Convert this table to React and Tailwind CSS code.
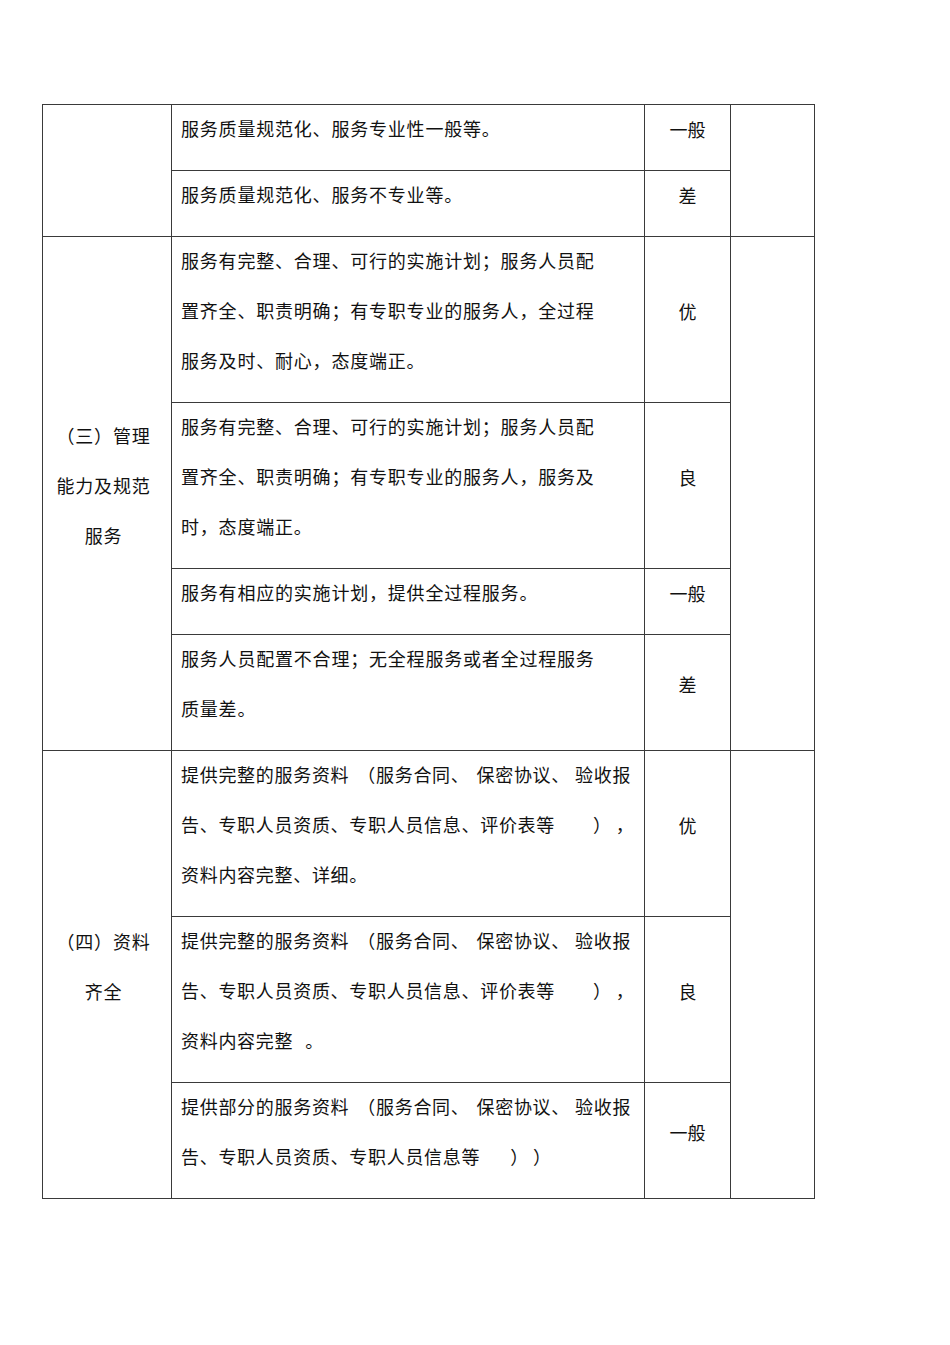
import React from "react";

const B = "border-r border-b border-[#3a3a3a]";

function Mid({ children, tight }) {
  return (
    <div className={`${B} pl-[9px] pr-[4px] pb-[17px]`}>
      <div className={`-mt-[2px] leading-[50px] ${tight ? "tracking-[0.7px]" : "tracking-[0.8px]"}`}>{children}</div>
    </div>
  );
}

function Grade({ children }) {
  return (
    <div className={`${B} flex items-center justify-center pb-[18px]`}>
      <span className="leading-[46px]">{children}</span>
    </div>
  );
}

function Left({ span, children }) {
  return (
    <div className={`${B} ${span} flex items-center justify-center pb-[17px] pr-[7px] text-center`}>
      <div className="leading-[50px] tracking-[0.8px]">{children}</div>
    </div>
  );
}

function Right({ span }) {
  return <div className={`${B} ${span}`} />;
}

export default function App() {
  return (
    <div
      className="w-[950px] min-h-[1345px] bg-white pt-[104px] pl-[42px] text-[18px] text-[#111]"
      style={{ fontFamily: '"Noto Sans CJK SC", "Noto Sans", sans-serif' }}
    >
      <div className="grid w-[773px] grid-cols-[129px_473px_86px_84px] border-l border-t border-[#3a3a3a]">
        {/* Group 1 */}
        <Left span="row-span-2" />
        <Mid>服务质量规范化、服务专业性一般等。</Mid>
        <Grade>一般</Grade>
        <Right span="row-span-2" />
        <Mid>服务质量规范化、服务不专业等。</Mid>
        <Grade>差</Grade>

        {/* Group 2 */}
        <Left span="row-span-4">
          <div>（三）管理</div>
          <div>能力及规范</div>
          <div>服务</div>
        </Left>
        <Mid>
          <div>服务有完整、合理、可行的实施计划；服务人员配</div>
          <div>置齐全、职责明确；有专职专业的服务人，全过程</div>
          <div>服务及时、耐心，态度端正。</div>
        </Mid>
        <Grade>优</Grade>
        <Right span="row-span-4" />
        <Mid>
          <div>服务有完整、合理、可行的实施计划；服务人员配</div>
          <div>置齐全、职责明确；有专职专业的服务人，服务及</div>
          <div>时，态度端正。</div>
        </Mid>
        <Grade>良</Grade>
        <Mid>服务有相应的实施计划，提供全过程服务。</Mid>
        <Grade>一般</Grade>
        <Mid>
          <div>服务人员配置不合理；无全程服务或者全过程服务</div>
          <div>质量差。</div>
        </Mid>
        <Grade>差</Grade>

        {/* Group 3 */}
        <Left span="row-span-3">
          <div>（四）资料</div>
          <div>齐全</div>
        </Left>
        <Mid tight>
          <div className="flex whitespace-nowrap">
            <span>提供完整的服务资料</span>
            <span className="ml-[8px]">（服务合同、</span>
            <span className="ml-[7px]">保密协议、</span>
            <span className="ml-[5px]">验收报</span>
          </div>
          <div className="flex whitespace-nowrap">
            <span>告、专职人员资质、专职人员信息、评价表等</span>
            <span className="ml-[38px]">）</span>
            <span className="ml-[4px]">，</span>
          </div>
          <div>资料内容完整、详细。</div>
        </Mid>
        <Grade>优</Grade>
        <Right span="row-span-3" />
        <Mid tight>
          <div className="flex whitespace-nowrap">
            <span>提供完整的服务资料</span>
            <span className="ml-[8px]">（服务合同、</span>
            <span className="ml-[7px]">保密协议、</span>
            <span className="ml-[5px]">验收报</span>
          </div>
          <div className="flex whitespace-nowrap">
            <span>告、专职人员资质、专职人员信息、评价表等</span>
            <span className="ml-[38px]">）</span>
            <span className="ml-[4px]">，</span>
          </div>
          <div className="flex whitespace-nowrap">
            <span>资料内容完整</span>
            <span className="ml-[12px]">。</span>
          </div>
        </Mid>
        <Grade>良</Grade>
        <Mid tight>
          <div className="flex whitespace-nowrap">
            <span>提供部分的服务资料</span>
            <span className="ml-[8px]">（服务合同、</span>
            <span className="ml-[7px]">保密协议、</span>
            <span className="ml-[5px]">验收报</span>
          </div>
          <div className="flex whitespace-nowrap">
            <span>告、专职人员资质、专职人员信息等</span>
            <span className="ml-[30px]">）</span>
            <span className="ml-[4px]">）</span>
          </div>
        </Mid>
        <Grade>一般</Grade>
      </div>
    </div>
  );
}
